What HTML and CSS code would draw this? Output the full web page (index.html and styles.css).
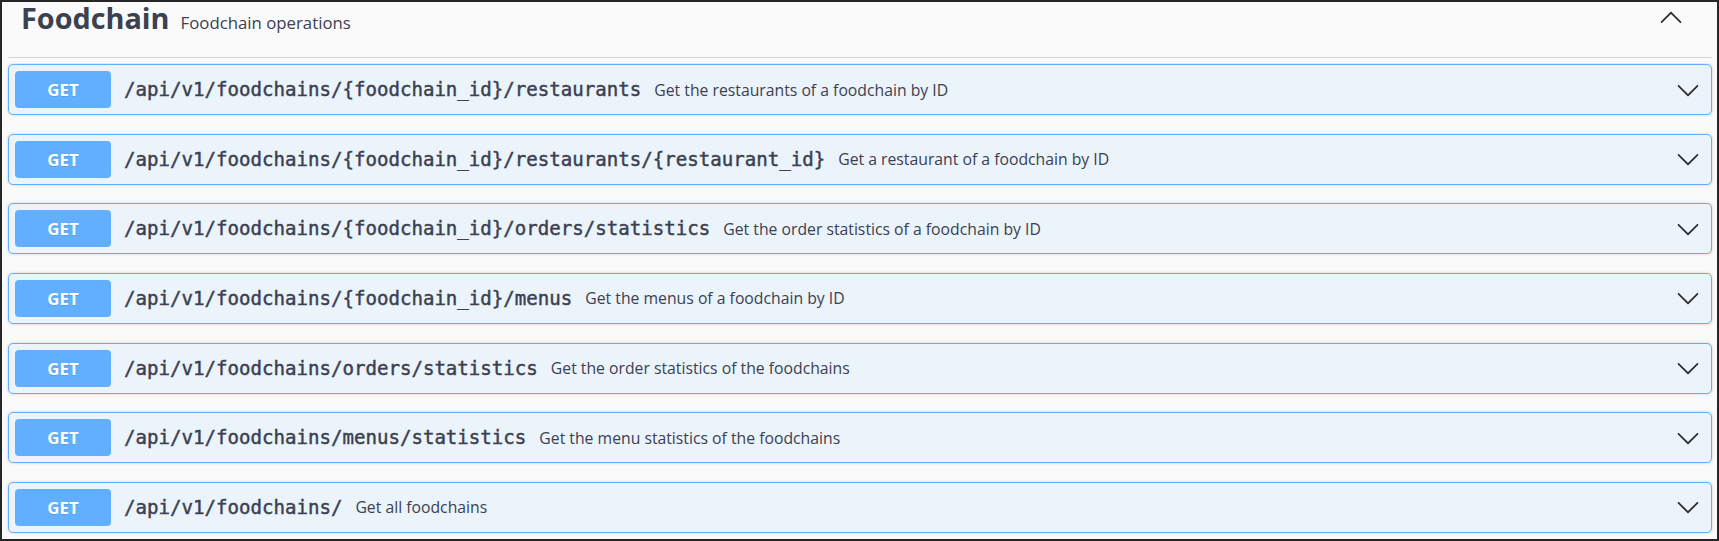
FILE: index.html
```html
<!DOCTYPE html>
<html lang="en">
<head>
<meta charset="utf-8">
<title>Foodchain</title>
<link rel="stylesheet" href="styles.css">
</head>
<body>
<div class="frame">
  <div class="tag-section">
    <h3 class="tag">
      <span class="tag-title">Foodchain</span>
      <small class="tag-desc">Foodchain operations</small>
      <span class="spacer"></span>
      <svg class="arrow up" viewBox="0 0 20 20" width="24" height="24"><path d="M17.418 6.109c.272-.268.709-.268.979 0s.271.701 0 .969l-7.908 7.83c-.27.268-.707.268-.979 0l-7.908-7.830c-.27-.268-.27-.701 0-.969.271-.268.709-.268.979 0L10 13.250l7.418-7.141z"/></svg>
    </h3>
    <div class="ops">
      <div class="opblock">
        <span class="method">GET</span>
        <span class="path">/api/v1/foodchains/{foodchain_id}/restaurants</span>
        <span class="desc">Get the restaurants of a foodchain by ID</span>
        <span class="spacer"></span>
        <svg class="arrow" viewBox="0 0 20 20" width="24" height="24"><path d="M17.418 6.109c.272-.268.709-.268.979 0s.271.701 0 .969l-7.908 7.83c-.27.268-.707.268-.979 0l-7.908-7.830c-.27-.268-.27-.701 0-.969.271-.268.709-.268.979 0L10 13.250l7.418-7.141z"/></svg>
      </div>
      <div class="opblock">
        <span class="method">GET</span>
        <span class="path">/api/v1/foodchains/{foodchain_id}/restaurants/{restaurant_id}</span>
        <span class="desc">Get a restaurant of a foodchain by ID</span>
        <span class="spacer"></span>
        <svg class="arrow" viewBox="0 0 20 20" width="24" height="24"><path d="M17.418 6.109c.272-.268.709-.268.979 0s.271.701 0 .969l-7.908 7.83c-.27.268-.707.268-.979 0l-7.908-7.830c-.27-.268-.27-.701 0-.969.271-.268.709-.268.979 0L10 13.250l7.418-7.141z"/></svg>
      </div>
      <div class="opblock">
        <span class="method">GET</span>
        <span class="path">/api/v1/foodchains/{foodchain_id}/orders/statistics</span>
        <span class="desc">Get the order statistics of a foodchain by ID</span>
        <span class="spacer"></span>
        <svg class="arrow" viewBox="0 0 20 20" width="24" height="24"><path d="M17.418 6.109c.272-.268.709-.268.979 0s.271.701 0 .969l-7.908 7.83c-.27.268-.707.268-.979 0l-7.908-7.830c-.27-.268-.27-.701 0-.969.271-.268.709-.268.979 0L10 13.250l7.418-7.141z"/></svg>
      </div>
      <div class="opblock">
        <span class="method">GET</span>
        <span class="path">/api/v1/foodchains/{foodchain_id}/menus</span>
        <span class="desc">Get the menus of a foodchain by ID</span>
        <span class="spacer"></span>
        <svg class="arrow" viewBox="0 0 20 20" width="24" height="24"><path d="M17.418 6.109c.272-.268.709-.268.979 0s.271.701 0 .969l-7.908 7.83c-.27.268-.707.268-.979 0l-7.908-7.830c-.27-.268-.27-.701 0-.969.271-.268.709-.268.979 0L10 13.250l7.418-7.141z"/></svg>
      </div>
      <div class="opblock">
        <span class="method">GET</span>
        <span class="path">/api/v1/foodchains/orders/statistics</span>
        <span class="desc">Get the order statistics of the foodchains</span>
        <span class="spacer"></span>
        <svg class="arrow" viewBox="0 0 20 20" width="24" height="24"><path d="M17.418 6.109c.272-.268.709-.268.979 0s.271.701 0 .969l-7.908 7.83c-.27.268-.707.268-.979 0l-7.908-7.830c-.27-.268-.27-.701 0-.969.271-.268.709-.268.979 0L10 13.250l7.418-7.141z"/></svg>
      </div>
      <div class="opblock">
        <span class="method">GET</span>
        <span class="path">/api/v1/foodchains/menus/statistics</span>
        <span class="desc">Get the menu statistics of the foodchains</span>
        <span class="spacer"></span>
        <svg class="arrow" viewBox="0 0 20 20" width="24" height="24"><path d="M17.418 6.109c.272-.268.709-.268.979 0s.271.701 0 .969l-7.908 7.83c-.27.268-.707.268-.979 0l-7.908-7.830c-.27-.268-.27-.701 0-.969.271-.268.709-.268.979 0L10 13.250l7.418-7.141z"/></svg>
      </div>
      <div class="opblock">
        <span class="method">GET</span>
        <span class="path">/api/v1/foodchains/</span>
        <span class="desc">Get all foodchains</span>
        <span class="spacer"></span>
        <svg class="arrow" viewBox="0 0 20 20" width="24" height="24"><path d="M17.418 6.109c.272-.268.709-.268.979 0s.271.701 0 .969l-7.908 7.83c-.27.268-.707.268-.979 0l-7.908-7.830c-.27-.268-.27-.701 0-.969.271-.268.709-.268.979 0L10 13.250l7.418-7.141z"/></svg>
      </div>
    </div>
  </div>
</div>
</body>
</html>
```

FILE: styles.css
```css
* { box-sizing: border-box; }
html, body { margin: 0; padding: 0; }
body {
  background: #fafafa;
  font-family: "Open Sans", "Noto Sans", sans-serif;
  color: #3b4151;
}
.frame {
  width: 1719px;
  height: 541px;
  border: 2px solid #262626;
  background: #fafafa;
  overflow: hidden;
}
.tag-section {
  padding: 0 5px 0 6px;
}
.tag {
  margin: 0;
  height: 56px;
  display: flex;
  align-items: baseline;
  padding: 0 29px 0 13px;
  border-bottom: 1px solid rgba(59, 65, 81, 0.2);
  font-weight: 700;
}
.tag-title {
  font-size: 28.8px;
  line-height: 32px;
  color: #3b4151;
}
.tag-desc {
  font-size: 16.8px;
  font-weight: 400;
  margin-left: 11px;
  color: #3b4151;
}
.spacer { flex: 1; }
.arrow {
  flex: none;
  fill: #2b2b2b;
}
.arrow.up {
  align-self: flex-start;
  margin-top: 4px;
  transform: rotate(180deg);
}
.ops {
  padding-top: 6px;
}
.opblock {
  display: flex;
  align-items: center;
  height: 51px;
  padding: 0 6px;
  margin-bottom: 18.67px;
  background: #ebf3fb;
  border: 1px solid #61affe;
  border-radius: 5px;
  box-shadow: 0 0 3px rgba(0, 0, 0, 0.19);
}
.method {
  flex: none;
  width: 96px;
  height: 37px;
  line-height: 37px;
  text-align: center;
  background: #61affe;
  color: #fff;
  border-radius: 4px;
  font-size: 16.8px;
  font-weight: 700;
  text-shadow: 0 1px 0 rgba(0, 0, 0, 0.1);
}
.path {
  flex: none;
  padding: 0 12px 0 13px;
  font-family: "DejaVu Sans Mono", monospace;
  font-size: 19.1px;
  font-weight: 400;
  -webkit-text-stroke: 0.45px #3b4151;
  color: #3b4151;
}
.desc {
  font-size: 15.75px;
  color: #3b4151;
  padding-left: 1px;
}
.opblock .arrow {
  margin-right: 5px;
}
```
